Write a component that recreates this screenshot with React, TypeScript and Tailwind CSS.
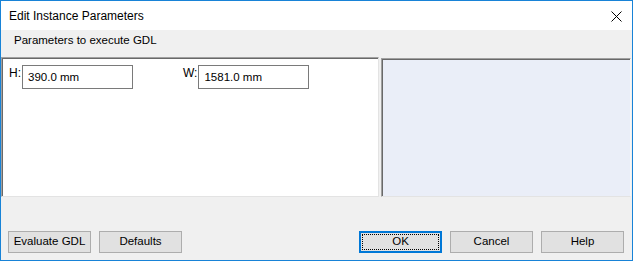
const font = "font-['Liberation_Sans',Arial,sans-serif]";

function WinButton({label, focused}: {label: string; focused?: boolean}) {
  return (
    <button
      className={
        "w-[83px] h-[22px] bg-[#e1e1e1] text-[11.5px] text-black flex items-center justify-center " +
        (focused ? "border-2 border-[#0078d7] p-px" : "border border-[#adadad]")
      }>
      {focused ? (
        <span className="w-full h-full border border-dotted border-black flex items-center justify-center">
          {label}
        </span>
      ) : (
        label
      )}
    </button>
  );
}

function Field({label, value}: {label: string; value: string}) {
  return (
    <div className="flex items-start">
      <span className="text-[12px] leading-none mt-[2px] mr-px">{label}</span>
      <div className="w-[111px] h-[24px] border border-[#7a7a7a] bg-white text-[11.5px] flex items-center pl-[5px] pt-px">
        {value}
      </div>
    </div>
  );
}

const App = () => {
  return (
    <div className={"w-[633px] h-[261px] border border-[#1883d7] bg-[#f0f0f0] flex flex-col text-black " + font}>
      {/* title bar */}
      <div className="h-[29px] bg-white flex items-center justify-between pl-[8px] pr-[10px]">
        <span className="text-[12px] mt-[1px]">Edit Instance Parameters</span>
        <svg width="11" height="11" viewBox="0 0 11 11" className="mt-[1px]">
          <path d="M0.5 0.5 L10.5 10.5 M10.5 0.5 L0.5 10.5" stroke="#000" strokeWidth="1" />
        </svg>
      </div>

      {/* header band */}
      <div className="h-[27px] flex items-center pl-[13px] pb-[6px]">
        <span className="text-[11.5px]">Parameters to execute GDL</span>
      </div>

      {/* panels */}
      <div className="flex h-[140px] gap-[2px] pr-px">
        <div className="w-[378px] border-t border-l border-[#a0a0a0] border-r border-b border-r-[#e3e3e3] border-b-[#e3e3e3]">
          <div className="h-full border-t border-l border-[#696969] bg-white flex gap-[50px] pl-[6px] pt-[6px]">
            <Field label="H:" value="390.0 mm" />
            <Field label="W:" value="1581.0 mm" />
          </div>
        </div>
        <div className="flex-1 mt-px border-t border-l border-[#a0a0a0] border-r border-b border-r-[#f7f7f7] border-b-[#e3e3e3]">
          <div className="h-full border-t border-l border-[#696969] bg-[#eaeef8]" />
        </div>
      </div>

      {/* buttons */}
      <div className="flex-1 flex items-end pb-[7px] pl-[7px] pr-[8px]">
        <div className="flex gap-[8px]">
          <WinButton label="Evaluate GDL" />
          <WinButton label="Defaults" />
        </div>
        <div className="ml-auto flex gap-[8px]">
          <WinButton label="OK" focused />
          <WinButton label="Cancel" />
          <WinButton label="Help" />
        </div>
      </div>
    </div>
  );
};

export default App;
